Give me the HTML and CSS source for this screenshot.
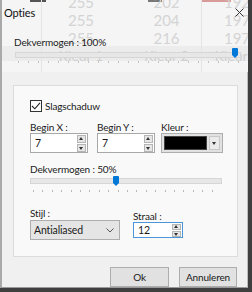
FILE: index.html
```html
<!DOCTYPE html>
<html lang="nl">
<head>
  <meta charset="UTF-8">
  <title>Opties</title>
  <link rel="stylesheet" href="styles.css">
</head>
<body>
  <div class="window">
    <div class="backdrop">
      <span class="bd-bar dark"></span>
      <span class="bd-bar dark2"></span>
      <span class="bd-bar red"></span>
      <div class="bd-band"></div>
      <div class="bd-col c1"><span>255</span><span>255</span><span>255</span><span class="name">Kleur 1</span></div>
      <div class="bd-col c2"><span>202</span><span>204</span><span>216</span><span class="name">Kleur 2</span></div>
      <div class="bd-col c3"><span>192</span><span>197</span><span>197</span><span class="name">Kleur 3</span></div>
    </div>

    <div class="titlebar">
      <span class="title">Opties</span>
      <svg class="close" width="9" height="9" viewBox="0 0 9 9"><path d="M0.5 0.5L8.5 8.5M8.5 0.5L0.5 8.5" stroke="#333" stroke-width="1"/></svg>
    </div>

    <div class="top">
      <div class="label">Dekvermogen : 100%</div>
      <div class="slider wide">
        <div class="track"></div>
        <div class="thumb" style="left: 217px"></div>
        <div class="ticks"></div>
      </div>
    </div>

    <div class="group">
      <label class="check">
        <span class="box"><svg width="10" height="10" viewBox="0 0 10 10"><path d="M1 5L3.8 7.8L9 1.8" fill="none" stroke="#222" stroke-width="1.1"/></svg></span>
        Slagschaduw
      </label>

      <div class="row">
        <div class="field">
          <div class="label">Begin X :</div>
          <div class="spin w58"><span class="val">7</span><span class="arrows"><i class="up"></i><i class="down"></i></span></div>
        </div>
        <div class="field">
          <div class="label">Begin Y :</div>
          <div class="spin w58"><span class="val">7</span><span class="arrows"><i class="up"></i><i class="down"></i></span></div>
        </div>
        <div class="field kleur">
          <div class="label">Kleur :</div>
          <div class="colorpick"><span class="swatch"></span><span class="drop"></span></div>
        </div>
      </div>

      <div class="label opacity">Dekvermogen : 50%</div>
      <div class="slider narrow">
        <div class="track"></div>
        <div class="thumb" style="left: 83px"></div>
        <div class="ticks"></div>
      </div>

      <div class="row bottom-row">
        <div class="field">
          <div class="label">Stijl :</div>
          <div class="combo"><span>Antialiased</span>
            <svg width="8" height="5" viewBox="0 0 8 5"><path d="M0.5 0.5L4 4L7.5 0.5" fill="none" stroke="#555" stroke-width="1"/></svg>
          </div>
        </div>
        <div class="field straal">
          <div class="label">Straal :</div>
          <div class="spin w50 focus"><span class="val">12</span><span class="arrows"><i class="up"></i><i class="down"></i></span></div>
        </div>
      </div>
    </div>

    <div class="buttons">
      <button class="btn ok">Ok</button>
      <button class="btn">Annuleren</button>
    </div>
  </div>
</body>
</html>
```

FILE: styles.css
```css
html, body {
  margin: 0;
  padding: 0;
}

body {
  width: 252px;
  height: 292px;
  background: #3f3f3f;
  font-family: Lato, "Open Sans", sans-serif;
  font-size: 10px;
  letter-spacing: -0.15px;
  color: #1a1a1a;
  overflow: hidden;
}

.window {
  position: relative;
  box-sizing: border-box;
  width: 248px;
  height: 288px;
  background: #f0f0f0;
  border-left: 2px solid #a9a9a9;
  border-right: 1px solid #bdbdbd;
  border-bottom: 1px solid #9a9a9a;
}

/* faded content of the window behind the dialog */
.backdrop {
  position: absolute;
  left: 0;
  top: 0;
  width: 246px;
  height: 72px;
  background: #f5f5f5;
  overflow: hidden;
  letter-spacing: 0;
}

.bd-bar {
  position: absolute;
  top: 0;
  height: 2px;
}

.bd-bar.dark { left: 28px; width: 16px; background: #555; }
.bd-bar.dark2 { left: 146px; width: 14px; background: #777; }
.bd-bar.red { left: 199px; width: 30px; background: #d99a9a; }

.bd-band {
  position: absolute;
  left: 0;
  right: 0;
  top: 46px;
  height: 15px;
  background: #ececec;
}

.bd-col {
  position: absolute;
  top: -7px;
  height: 80px;
  display: flex;
  flex-direction: column;
  align-items: center;
  font-size: 15px;
  line-height: 18px;
  color: #d4d4d4;
  border-left: 1px solid #e4e4e4;
}

.bd-col .name {
  font-size: 14px;
  line-height: 18px;
  color: #cfcfcf;
}

.bd-col.c1 { left: 39px; width: 78px; }
.bd-col.c2 { left: 126px; width: 75px; border-left-color: transparent; }
.bd-col.c3 { left: 199px; width: 70px; }

.titlebar {
  position: relative;
  height: 26px;
  display: flex;
  align-items: center;
  justify-content: space-between;
  padding: 0 3px 0 2px;
}

.title {
  font-size: 11px;
  line-height: 12px;
  color: #111;
  margin-top: -1px;
}

.close {
  margin-top: -2px;
}

.top {
  position: relative;
  padding: 10px 0 0 12px;
  height: 41px;
}

.label {
  line-height: 12px;
  color: #1a1a1a;
}

.slider {
  position: relative;
  height: 17px;
}

.slider.wide {
  width: 226px;
  margin-left: 1px;
}

.slider.narrow { width: 192px; }

.track {
  position: absolute;
  left: 0;
  right: 0;
  top: 4px;
  height: 4px;
  background: #e7e7e7;
  border: 1px solid #d6d6d6;
}

.narrow .track {
  top: 3px;
}

.thumb {
  position: absolute;
  top: 0;
  width: 6px;
  height: 7px;
  background: #0078d7;
  border-radius: 1px 1px 0 0;
}

.narrow .thumb {
  top: 1px;
}

.thumb::after {
  content: "";
  position: absolute;
  left: 0;
  top: 7px;
  border-left: 3px solid transparent;
  border-right: 3px solid transparent;
  border-top: 3px solid #0078d7;
}

.ticks {
  position: absolute;
  left: 3px;
  right: 2px;
  top: 13px;
  height: 2px;
  background: repeating-linear-gradient(to right, #c4c4c4 0 1px, transparent 1px 10px);
}

.narrow .ticks {
  top: 15px;
  background: repeating-linear-gradient(to right, #b8b8b8 0 1px, transparent 1px 9.4px);
}

.group {
  box-sizing: border-box;
  margin: 8px 0 0 11px;
  width: 225px;
  height: 172px;
  padding: 14px 0 0 16px;
  background: #f9f9f9;
  border: 1px solid #dcdcdc;
}

.check {
  display: flex;
  align-items: center;
  gap: 3px;
  height: 12px;
}

.box {
  width: 10px;
  height: 10px;
  border: 1px solid #333;
  background: #fff;
  display: flex;
}

.row {
  display: flex;
  align-items: flex-start;
  gap: 9px;
  margin-top: 10px;
}

.field .label {
  line-height: 11px;
}

.kleur {
  margin-left: -3px;
}

.spin {
  box-sizing: border-box;
  display: flex;
  justify-content: space-between;
  align-items: center;
  height: 20px;
  background: #fff;
  border: 1px solid #a8a8a8;
  padding: 0 1px 0 4px;
}

.spin.w58 { width: 58px; }

.spin.w50 {
  width: 50px;
  height: 16px;
}

.spin.focus {
  border-color: #4a94da;
}

.val {
  line-height: 12px;
  font-size: 10.5px;
}

.arrows {
  display: flex;
  flex-direction: column;
  gap: 1px;
}

.arrows i {
  display: block;
  position: relative;
  width: 7px;
  height: 6px;
  background: #e6e6e6;
  border: 1px solid #b5b5b5;
}

.w50 .arrows i {
  height: 4px;
}

.arrows i::after,
.drop::after {
  content: "";
  position: absolute;
  left: 1px;
  border-left: 2.5px solid transparent;
  border-right: 2.5px solid transparent;
}

.arrows .up::after {
  top: 1px;
  border-bottom: 3px solid #333;
}

.arrows .down::after {
  top: 2px;
  border-top: 3px solid #333;
}

.w50 .arrows .up::after { top: 0; }
.w50 .arrows .down::after { top: 1px; }

.colorpick {
  box-sizing: border-box;
  display: flex;
  align-items: center;
  gap: 2px;
  width: 62px;
  height: 20px;
  padding: 2px;
  background: #e1e1e1;
  border: 1px solid #adadad;
}

.swatch {
  box-sizing: border-box;
  width: 44px;
  height: 14px;
  background: #000;
  border: 1px solid #444;
}

.drop {
  position: relative;
  box-sizing: border-box;
  width: 11px;
  height: 14px;
  background: #ebebeb;
  border: 1px solid #c8c8c8;
}

.drop::after {
  top: 5px;
  left: 2px;
  border-top: 3px solid #333;
}

.opacity {
  margin-top: 10px;
}

.bottom-row {
  margin-top: 16px;
  gap: 13px;
}

.straal {
  margin-top: 3px;
}

.combo {
  box-sizing: border-box;
  display: flex;
  align-items: center;
  justify-content: space-between;
  width: 90px;
  height: 20px;
  margin-top: 1px;
  padding: 0 5px 0 3px;
  background: #e5e5e5;
  border: 1px solid #adadad;
  font-size: 10.5px;
}

.buttons {
  display: flex;
  justify-content: flex-end;
  gap: 10px;
  margin: 10px 10px 0 0;
}

.btn {
  box-sizing: border-box;
  width: 58px;
  height: 20px;
  padding: 0;
  background: #e1e1e1;
  border: 1px solid #adadad;
  font-family: inherit;
  font-size: 10px;
  letter-spacing: -0.15px;
  color: #1a1a1a;
}

.btn.ok {
  width: 59px;
}
```
